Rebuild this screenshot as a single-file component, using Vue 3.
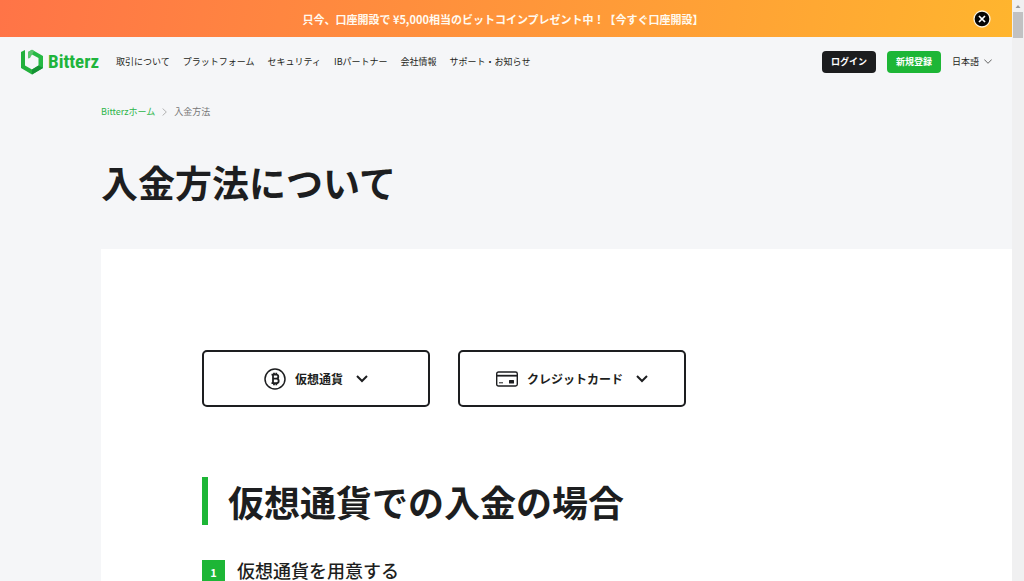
<script setup>
const navItems = [
  '取引について',
  'プラットフォーム',
  'セキュリティ',
  'IBパートナー',
  '会社情報',
  'サポート・お知らせ',
]
</script>

<template>
  <div class="viewport">
    <div class="page">
      <div class="banner">
        <a class="banner-link" href="#">只今、口座開設で ¥5,000相当のビットコインプレゼント中！【今すぐ口座開設】</a>
        <button class="banner-close" type="button" aria-label="閉じる">
          <svg width="18" height="18" viewBox="0 0 18 18" aria-hidden="true">
            <circle cx="9" cy="9" r="8" fill="#050505" stroke="#fff3dc" stroke-width="1.3" />
            <path d="M6 6l6 6M12 6l-6 6" stroke="#fff" stroke-width="1.7" />
          </svg>
        </button>
      </div>

      <header class="header">
        <a class="logo" href="#">
          <svg width="22" height="26" viewBox="0 0 22 26" aria-hidden="true">
            <path d="M0 3L4 1V16.500L11 20.500V25.500L0 19Z" fill="#22b03c" />
            <path d="M11 25.500V20.500L17.500 16.500V9L11 5.500L7 7.800V3L11 0.800L22 7V19Z" fill="#25b943" />
            <path d="M11 25.500V20.500L17.500 16.500L22 19Z" fill="#159235" />
            <path d="M7 3L11 0.800L13 2L11 5.500L9 9L7 9.500Z" fill="#5cc56e" />
          </svg>
          <span class="logo-name">Bitterz</span>
        </a>
        <nav class="nav">
          <a v-for="item in navItems" :key="item" href="#">{{ item }}</a>
        </nav>
        <div class="actions">
          <button class="btn dark" type="button">ログイン</button>
          <button class="btn green" type="button">新規登録</button>
          <button class="lang" type="button">
            日本語
            <svg width="8" height="5" viewBox="0 0 8 5" aria-hidden="true">
              <path d="M0.300 0.500L4 4.300L7.700 0.500" fill="none" stroke="#555" stroke-width="0.900" />
            </svg>
          </button>
        </div>
      </header>

      <main class="main">
        <nav class="crumbs" aria-label="パンくず">
          <a href="#">Bitterzホーム</a>
          <svg width="5" height="8" viewBox="0 0 5 8" aria-hidden="true">
            <path d="M0.600 0.500L4.300 4L0.600 7.500" fill="none" stroke="#aaa" stroke-width="0.900" />
          </svg>
          <span>入金方法</span>
        </nav>
        <h1>入金方法について</h1>

        <div class="panel">
          <div class="methods">
            <button class="method" type="button">
              <svg width="22" height="22" viewBox="0 0 22 22" fill="none" stroke="#1d1e20" aria-hidden="true">
                <circle cx="11" cy="11" r="10" stroke-width="1.500" />
                <path d="M7.500 6.700H12.200C15 6.700 15 10.700 12.200 10.700H9M12.200 10.700C15.500 10.700 15.500 15.200 12.200 15.200H7.500M9 6.700V15.200M10 4.800V6.700M12.300 4.800V6.700M10 15.200V17.200M12.300 15.200V17.200" stroke-width="1.800" />
              </svg>
              <span>仮想通貨</span>
              <svg class="chevron" width="12" height="8" viewBox="0 0 12 8" aria-hidden="true">
                <path d="M1 1L6 6L11 1" fill="none" stroke="#1d1e20" stroke-width="2" />
              </svg>
            </button>
            <button class="method" type="button">
              <svg width="22" height="16" viewBox="0 0 22 16" fill="none" aria-hidden="true">
                <rect x="0.700" y="1" width="20.600" height="14" rx="1.800" stroke="#1d1e20" stroke-width="1.400" />
                <path d="M1 4.700H21" stroke="#1d1e20" stroke-width="1.800" />
                <path d="M3 11.800H7" stroke="#1d1e20" stroke-width="1" />
                <rect x="13" y="9" width="5" height="3.500" rx="0.500" fill="#1d1e20" />
              </svg>
              <span>クレジットカード</span>
              <svg class="chevron" width="12" height="8" viewBox="0 0 12 8" aria-hidden="true">
                <path d="M1 1L6 6L11 1" fill="none" stroke="#1d1e20" stroke-width="2" />
              </svg>
            </button>
          </div>

          <h2>仮想通貨での入金の場合</h2>
          <h3><span class="step">1</span><span>仮想通貨を用意する</span></h3>
        </div>
      </main>
    </div>

    <div class="scrollbar" aria-hidden="true">
      <svg width="12" height="12" viewBox="0 0 12 12"><path d="M3.500 8L6 5L8.500 8Z" fill="#999" /></svg>
      <div class="thumb"></div>
      <svg class="down" width="12" height="12" viewBox="0 0 12 12"><path d="M3 5L6 8L9 5Z" fill="#505050" /></svg>
    </div>
  </div>
</template>

<style>
body {
  margin: 0;
  background: #f5f6f8;
}
</style>

<style scoped>
.viewport {
  display: grid;
  grid-template-columns: minmax(0, 1fr) 12px;
  height: 100vh;
  overflow: hidden;
  color: #1d1e20;
  font-family: "Noto Sans CJK JP", "Noto Sans", sans-serif;
}

.page {
  min-width: 0;
  background: #f5f6f8;
}

a {
  color: inherit;
  text-decoration: none;
}

button {
  margin: 0;
  padding: 0;
  border: 0;
  background: none;
  color: inherit;
  font-family: inherit;
  cursor: pointer;
}

svg {
  display: block;
  flex: none;
}

.banner {
  display: grid;
  grid-template-columns: 44px 1fr 40px;
  align-items: center;
  height: 37px;
  padding-right: 10px;
  background: linear-gradient(100deg, #ff7447, #ffb52e);
}

.banner-link {
  grid-column: 2;
  color: #fffaf0;
  font-size: 11px;
  font-weight: 700;
  line-height: 16px;
  text-align: center;
  white-space: nowrap;
}

.banner-close {
  justify-self: center;
}

.header {
  display: flex;
  align-items: center;
  height: 49px;
  padding: 0 20px 0 21px;
  font-size: 9px;
}

.logo {
  display: flex;
  align-items: center;
  gap: 5px;
}

.logo-name {
  color: #20b43c;
  font-family: "Roboto Condensed", "Liberation Sans Narrow", Roboto, sans-serif;
  font-size: 19px;
  font-weight: 700;
  line-height: 26px;
}

.nav {
  display: flex;
  gap: 13px;
  margin-left: 17px;
  white-space: nowrap;
}

.actions {
  display: flex;
  align-items: center;
  gap: 11px;
  margin-left: auto;
}

.btn {
  width: 54px;
  height: 22px;
  border-radius: 4px;
  color: #fff;
  font-size: 9px;
  font-weight: 700;
}

.dark {
  background: #1c1d1f;
}

.green {
  background: #1db636;
}

.lang {
  display: flex;
  align-items: center;
  gap: 5px;
  font-size: 9px;
}

.main {
  padding-left: 101px;
}

.crumbs {
  display: flex;
  align-items: center;
  gap: 7px;
  padding-top: 18px;
  color: #777;
  font-size: 9px;
  line-height: 16px;
}

.crumbs a {
  color: #2cb548;
}

h1,
h2,
h3 {
  margin: 0;
  font-weight: 700;
}

h1 {
  padding: 34px 0 39px;
  font-size: 37px;
  line-height: 56px;
}

.panel {
  padding: 101px 101px 60px;
  background: #fff;
}

.methods {
  display: flex;
  gap: 28px;
}

.method {
  display: flex;
  align-items: center;
  justify-content: center;
  gap: 9px;
  flex: 0 1 228px;
  height: 57px;
  border: 2px solid #1d1e20;
  border-radius: 5px;
  font-size: 12px;
  font-weight: 700;
}

.chevron {
  margin-left: 4px;
}

h2 {
  margin-top: 70px;
  padding-left: 20px;
  border-left: 6px solid #1db636;
  font-size: 36px;
  line-height: 48px;
}

h3 {
  display: flex;
  align-items: flex-start;
  gap: 12px;
  margin-top: 35px;
  font-size: 18px;
  font-weight: 500;
  line-height: 20px;
}

.step {
  width: 23px;
  background: #1db636;
  color: #fff;
  font-size: 11px;
  font-weight: 700;
  line-height: 24px;
  text-align: center;
}

.scrollbar {
  display: flex;
  flex-direction: column;
  background: #f0f0f1;
}

.thumb {
  width: 10px;
  height: 26px;
  margin: 0 auto;
  background: #c1c1c2;
}

.down {
  margin-top: auto;
}
</style>
